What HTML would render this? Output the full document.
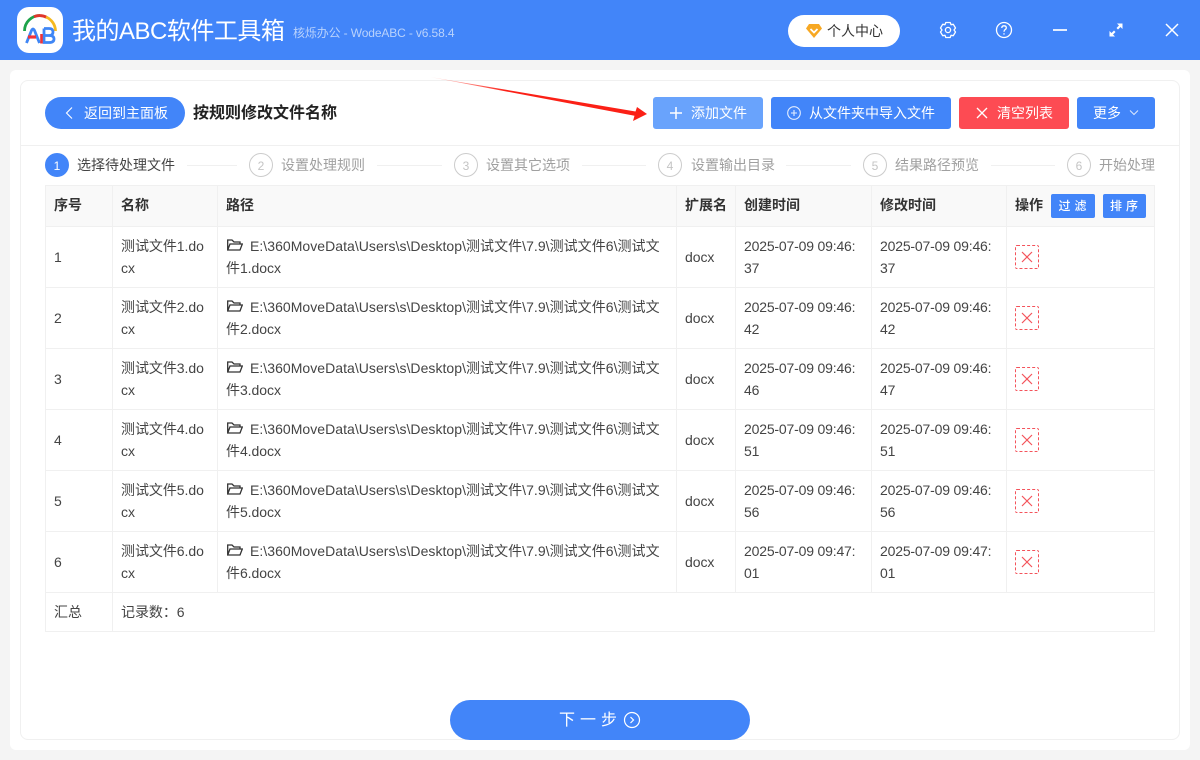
<!DOCTYPE html>
<html lang="zh-CN"><head><meta charset="utf-8"><title>我的ABC软件工具箱</title>
<style>
*{box-sizing:border-box}
html,body{margin:0;padding:0;width:1200px;height:760px;overflow:hidden;background:#f4f4f4;font-family:"Liberation Sans","Noto Sans CJK SC",sans-serif;color:#333;font-size:14px}
.a{position:absolute;white-space:nowrap}
.hdr{left:0;top:0;width:1200px;height:60px;background:#4285f9}
.panel{left:10px;top:70px;width:1180px;height:680px;background:#fff;border-radius:6px}
.card{left:20px;top:80px;width:1160px;height:660px;border:1px solid #f0f0f0;border-radius:8px;background:#fff}
.btn{height:32px;line-height:32px;color:#fff;border-radius:3px;background:#4285f9;font-size:14px;top:97px}
.line{background:#f0f0f0;height:1px}
.num{width:24px;height:24px;border-radius:50%;border:1px solid #ccc;color:#c4c4c4;text-align:center;line-height:24px;font-size:12px;top:153px}
.st{top:155px;font-size:14px;line-height:20px;color:#a0a0a0}
.v{width:1px;background:#f0f0f0}
.h{height:1px;background:#f0f0f0;left:45px;width:1110px}
.th{font-weight:bold;color:#333;font-size:14px;top:195px;line-height:20px}
.t{font-size:14px;line-height:22px;color:#444;letter-spacing:-.05px}
.p{letter-spacing:.04px}
.d{letter-spacing:-.18px}
.x{left:1015px;width:24px;height:24px;border:1px dashed #f4535b;border-radius:2px}
.x svg{display:block;margin:4px}
.small{top:194px;height:24px;line-height:24px;border-radius:2px;background:#4285f9;color:#fff;font-size:12px;font-weight:500;text-align:center;letter-spacing:4px;text-indent:3px}
.folder{left:227px}
</style></head><body>
<div class="a hdr"></div>
<div class="a" style="left:17px;top:7px;width:46px;height:46px;background:#fff;border-radius:12px"></div>
<svg class="a" style="left:17px;top:7px" width="46" height="46" viewBox="0 0 46 46" fill="none">
<path d="M7.500 24A15.500 15.500 0 0 1 23 8.500" stroke="#1da34a" stroke-width="2.800"/>
<path d="M17 9.700A15.500 15.500 0 0 1 30 10.500" stroke="#e0352b" stroke-width="2.800"/>
<path d="M29 10A15.500 15.500 0 0 1 38.500 24" stroke="#f5b921" stroke-width="2.800"/>
<path d="M9.500 36L14.500 23.500Q16 20.500 17.500 23.500L22.500 36" stroke="#3f86f5" stroke-width="2.800"/>
<path d="M11 30H19" stroke="#ef3338" stroke-width="3.200"/>
<path d="M27 21.500H32Q36 21.500 36 25Q36 28.500 32 28.500H27M32 28.500Q37 28.500 37 32Q37 35.500 32 35.500H27V21.500" stroke="#3f86f5" stroke-width="2.800"/>
<path d="M24.500 27V36.500" stroke="#ef3338" stroke-width="2.600"/>
</svg>
<div class="a" style="left:72px;top:15px;font-size:24px;line-height:34px;color:#fff;letter-spacing:-.5px">我的ABC软件工具箱</div>
<div class="a" style="left:293px;top:24px;font-size:12px;line-height:18px;color:#b9d2fc;letter-spacing:-.13px">核烁办公 - WodeABC - v6.58.4</div>
<div class="a" style="left:788px;top:15px;width:112px;height:32px;border-radius:16px;background:#fff"></div>
<svg class="a" style="left:805px;top:23px" width="18" height="16" viewBox="0 0 18 16"><path d="M4 1H14L17 5.500L9 15L1 5.500Z" fill="#f7a823"/><path d="M5.500 6L9 9.500L12.500 6" fill="none" stroke="#fff" stroke-width="1.800"/></svg>
<div class="a" style="left:827px;top:21px;font-size:14px;line-height:20px;color:#333">个人中心</div>
<svg class="a" style="left:938px;top:20px" width="20" height="20" viewBox="0 0 20 20" fill="none" stroke="#fff" stroke-width="1.300"><path d="M7.800 2.500H12.200L13 4.700L15.300 4.300L17.500 8L16 10L17.500 12L15.300 15.700L13 15.300L12.200 17.500H7.800L7 15.300L4.700 15.700L2.500 12L4 10L2.500 8L4.700 4.300L7 4.700Z" stroke-linejoin="round"/><circle cx="10" cy="10" r="2.600"/></svg>
<svg class="a" style="left:994px;top:20px" width="20" height="20" viewBox="0 0 20 20" fill="none" stroke="#fff" stroke-width="1.300"><circle cx="10" cy="10" r="7.500"/><path d="M7.800 8Q7.800 5.800 10 5.800Q12.300 5.800 12.300 7.800Q12.300 9 11 9.700Q10 10.300 10 11.700"/><path d="M10 13.200V14.600"/></svg>
<div class="a" style="left:1053px;top:29px;width:14px;height:2px;background:#e3edfe"></div>
<svg class="a" style="left:1108px;top:22px" width="16" height="16" viewBox="0 0 16 16" fill="#fff"><path d="M9 1.500H14.500V7L12.500 5L10 7.500L8.500 6L11 3.500Z"/><path d="M7 14.500H1.500V9L3.500 11L6 8.500L7.500 10L5 12.500Z"/></svg>
<svg class="a" style="left:1164px;top:22px" width="16" height="16" viewBox="0 0 16 16" stroke="#fff" stroke-width="1.500"><path d="M2 2L14 14M14 2L2 14"/></svg>

<div class="a panel"></div>
<div class="a card"></div>
<div class="a line" style="left:21px;top:145px;width:1158px"></div>

<div class="a" style="left:45px;top:97px;width:140px;height:32px;border-radius:16px;background:#4285f9"></div>
<svg class="a" style="left:63px;top:106px" width="12" height="14" viewBox="0 0 12 14" fill="none" stroke="#fff" stroke-width="1.100"><path d="M9 1.500L3.500 7L9 12.500"/></svg>
<div class="a" style="left:84px;top:103px;font-size:14px;line-height:20px;color:#fff">返回到主面板</div>
<div class="a" style="left:193px;top:102px;font-size:16px;line-height:23px;font-weight:bold;color:#222">按规则修改文件名称</div>

<svg class="a" style="left:425px;top:72px" width="225" height="55" viewBox="0 0 225 55"><defs><linearGradient id="g" x1="0" x2="1" y1="0" y2="0"><stop offset="0" stop-color="#ff2a1f" stop-opacity=".15"/><stop offset=".35" stop-color="#fb2016"/></linearGradient></defs><path d="M5 5L210.500 39.500L212 35L222 42L208 49L209.500 43.800Z" fill="url(#g)"/></svg>

<div class="a btn" style="left:653px;width:110px;background:#69a3fc"></div>
<svg class="a" style="left:669px;top:106px" width="14" height="14" viewBox="0 0 14 14" stroke="#fff" stroke-width="1.500"><path d="M7 1V13M1 7H13"/></svg>
<div class="a" style="left:691px;top:103px;line-height:20px;color:#fff">添加文件</div>
<div class="a btn" style="left:771px;width:180px"></div>
<svg class="a" style="left:787px;top:106px" width="14" height="14" viewBox="0 0 14 14" fill="none" stroke="#e5eefe" stroke-width="1.100"><circle cx="7" cy="7" r="6.300"/><path d="M7 4V10M4 7H10"/></svg>
<div class="a" style="left:809px;top:103px;line-height:20px;color:#fff">从文件夹中导入文件</div>
<div class="a btn" style="left:959px;width:110px;background:#fd4b53"></div>
<svg class="a" style="left:976px;top:107px" width="12" height="12" viewBox="0 0 12 12" stroke="#fff" stroke-width="1.300"><path d="M1 1L11 11M11 1L1 11"/></svg>
<div class="a" style="left:997px;top:103px;line-height:20px;color:#fff">清空列表</div>
<div class="a btn" style="left:1077px;width:78px"></div>
<div class="a" style="left:1093px;top:103px;line-height:20px;color:#fff">更多</div>
<svg class="a" style="left:1129px;top:109px" width="10" height="8" viewBox="0 0 10 8" fill="none" stroke="#dce8fe" stroke-width="1"><path d="M1 1.500L5 5.500L9 1.500"/></svg>

<div class="a num" style="left:45px;background:#4285f9;border-color:#4285f9;color:#fff">1</div>
<div class="a st" style="left:77px;color:#444">选择待处理文件</div>
<div class="a line" style="left:187px;top:165px;width:50px"></div>
<div class="a num" style="left:249px">2</div>
<div class="a st" style="left:281px">设置处理规则</div>
<div class="a line" style="left:377px;top:165px;width:65px"></div>
<div class="a num" style="left:454px">3</div>
<div class="a st" style="left:486px">设置其它选项</div>
<div class="a line" style="left:582px;top:165px;width:64px"></div>
<div class="a num" style="left:658px">4</div>
<div class="a st" style="left:691px">设置输出目录</div>
<div class="a line" style="left:786px;top:165px;width:65px"></div>
<div class="a num" style="left:863px">5</div>
<div class="a st" style="left:895px">结果路径预览</div>
<div class="a line" style="left:991px;top:165px;width:64px"></div>
<div class="a num" style="left:1067px">6</div>
<div class="a st" style="left:1099px">开始处理</div>

<div class="a" style="left:45px;top:185px;width:1110px;height:41px;background:#f9f9f9"></div>
<div class="a h" style="top:185px"></div><div class="a h" style="top:226px"></div><div class="a h" style="top:287px"></div><div class="a h" style="top:348px"></div><div class="a h" style="top:409px"></div><div class="a h" style="top:470px"></div><div class="a h" style="top:531px"></div><div class="a h" style="top:592px"></div><div class="a h" style="top:631px"></div>
<div class="a v" style="left:45px;top:185px;height:446px"></div>
<div class="a v" style="left:112px;top:185px;height:446px"></div>
<div class="a v" style="left:217px;top:185px;height:407px"></div>
<div class="a v" style="left:676px;top:185px;height:407px"></div>
<div class="a v" style="left:735px;top:185px;height:407px"></div>
<div class="a v" style="left:871px;top:185px;height:407px"></div>
<div class="a v" style="left:1006px;top:185px;height:407px"></div>
<div class="a v" style="left:1154px;top:185px;height:446px"></div>

<div class="a th" style="left:54px">序号</div>
<div class="a th" style="left:121px">名称</div>
<div class="a th" style="left:226px">路径</div>
<div class="a th" style="left:685px">扩展名</div>
<div class="a th" style="left:744px">创建时间</div>
<div class="a th" style="left:880px">修改时间</div>
<div class="a th" style="left:1015px">操作</div>
<div class="a small" style="left:1051px;width:44px">过滤</div>
<div class="a small" style="left:1103px;width:43px">排序</div>

<div class="a t" style="left:54px;top:246px">1</div>
<div class="a t" style="left:121px;top:235px">测试文件1.do<br>cx</div>
<svg class="a folder" style="top:239px" width="16" height="12" viewBox="0 0 16 12" fill="none" stroke="#333" stroke-width="1.300"><path d="M.7 11V1H5L7 3H13V5M.7 11L3 5H15.300L13 11Z"/></svg>
<div class="a t p" style="left:250px;top:235px">E:\360MoveData\Users\s\Desktop\测试文件\7.9\测试文件6\测试文</div>
<div class="a t" style="left:226px;top:257px">件1.docx</div>
<div class="a t" style="left:685px;top:246px">docx</div>
<div class="a t d" style="left:744px;top:235px">2025-07-09 09:46:<br>37</div>
<div class="a t d" style="left:880px;top:235px">2025-07-09 09:46:<br>37</div>
<div class="a x" style="top:245px"><svg width="14" height="14" viewBox="0 0 14 14" stroke="#f4535b" stroke-width="1.200"><path d="M2 2L12 12M12 2L2 12"/></svg></div>

<div class="a t" style="left:54px;top:307px">2</div>
<div class="a t" style="left:121px;top:296px">测试文件2.do<br>cx</div>
<svg class="a folder" style="top:300px" width="16" height="12" viewBox="0 0 16 12" fill="none" stroke="#333" stroke-width="1.300"><path d="M.7 11V1H5L7 3H13V5M.7 11L3 5H15.300L13 11Z"/></svg>
<div class="a t p" style="left:250px;top:296px">E:\360MoveData\Users\s\Desktop\测试文件\7.9\测试文件6\测试文</div>
<div class="a t" style="left:226px;top:318px">件2.docx</div>
<div class="a t" style="left:685px;top:307px">docx</div>
<div class="a t d" style="left:744px;top:296px">2025-07-09 09:46:<br>42</div>
<div class="a t d" style="left:880px;top:296px">2025-07-09 09:46:<br>42</div>
<div class="a x" style="top:306px"><svg width="14" height="14" viewBox="0 0 14 14" stroke="#f4535b" stroke-width="1.200"><path d="M2 2L12 12M12 2L2 12"/></svg></div>

<div class="a t" style="left:54px;top:368px">3</div>
<div class="a t" style="left:121px;top:357px">测试文件3.do<br>cx</div>
<svg class="a folder" style="top:361px" width="16" height="12" viewBox="0 0 16 12" fill="none" stroke="#333" stroke-width="1.300"><path d="M.7 11V1H5L7 3H13V5M.7 11L3 5H15.300L13 11Z"/></svg>
<div class="a t p" style="left:250px;top:357px">E:\360MoveData\Users\s\Desktop\测试文件\7.9\测试文件6\测试文</div>
<div class="a t" style="left:226px;top:379px">件3.docx</div>
<div class="a t" style="left:685px;top:368px">docx</div>
<div class="a t d" style="left:744px;top:357px">2025-07-09 09:46:<br>46</div>
<div class="a t d" style="left:880px;top:357px">2025-07-09 09:46:<br>47</div>
<div class="a x" style="top:367px"><svg width="14" height="14" viewBox="0 0 14 14" stroke="#f4535b" stroke-width="1.200"><path d="M2 2L12 12M12 2L2 12"/></svg></div>

<div class="a t" style="left:54px;top:429px">4</div>
<div class="a t" style="left:121px;top:418px">测试文件4.do<br>cx</div>
<svg class="a folder" style="top:422px" width="16" height="12" viewBox="0 0 16 12" fill="none" stroke="#333" stroke-width="1.300"><path d="M.7 11V1H5L7 3H13V5M.7 11L3 5H15.300L13 11Z"/></svg>
<div class="a t p" style="left:250px;top:418px">E:\360MoveData\Users\s\Desktop\测试文件\7.9\测试文件6\测试文</div>
<div class="a t" style="left:226px;top:440px">件4.docx</div>
<div class="a t" style="left:685px;top:429px">docx</div>
<div class="a t d" style="left:744px;top:418px">2025-07-09 09:46:<br>51</div>
<div class="a t d" style="left:880px;top:418px">2025-07-09 09:46:<br>51</div>
<div class="a x" style="top:428px"><svg width="14" height="14" viewBox="0 0 14 14" stroke="#f4535b" stroke-width="1.200"><path d="M2 2L12 12M12 2L2 12"/></svg></div>

<div class="a t" style="left:54px;top:490px">5</div>
<div class="a t" style="left:121px;top:479px">测试文件5.do<br>cx</div>
<svg class="a folder" style="top:483px" width="16" height="12" viewBox="0 0 16 12" fill="none" stroke="#333" stroke-width="1.300"><path d="M.7 11V1H5L7 3H13V5M.7 11L3 5H15.300L13 11Z"/></svg>
<div class="a t p" style="left:250px;top:479px">E:\360MoveData\Users\s\Desktop\测试文件\7.9\测试文件6\测试文</div>
<div class="a t" style="left:226px;top:501px">件5.docx</div>
<div class="a t" style="left:685px;top:490px">docx</div>
<div class="a t d" style="left:744px;top:479px">2025-07-09 09:46:<br>56</div>
<div class="a t d" style="left:880px;top:479px">2025-07-09 09:46:<br>56</div>
<div class="a x" style="top:489px"><svg width="14" height="14" viewBox="0 0 14 14" stroke="#f4535b" stroke-width="1.200"><path d="M2 2L12 12M12 2L2 12"/></svg></div>

<div class="a t" style="left:54px;top:551px">6</div>
<div class="a t" style="left:121px;top:540px">测试文件6.do<br>cx</div>
<svg class="a folder" style="top:544px" width="16" height="12" viewBox="0 0 16 12" fill="none" stroke="#333" stroke-width="1.300"><path d="M.7 11V1H5L7 3H13V5M.7 11L3 5H15.300L13 11Z"/></svg>
<div class="a t p" style="left:250px;top:540px">E:\360MoveData\Users\s\Desktop\测试文件\7.9\测试文件6\测试文</div>
<div class="a t" style="left:226px;top:562px">件6.docx</div>
<div class="a t" style="left:685px;top:551px">docx</div>
<div class="a t d" style="left:744px;top:540px">2025-07-09 09:47:<br>01</div>
<div class="a t d" style="left:880px;top:540px">2025-07-09 09:47:<br>01</div>
<div class="a x" style="top:550px"><svg width="14" height="14" viewBox="0 0 14 14" stroke="#f4535b" stroke-width="1.200"><path d="M2 2L12 12M12 2L2 12"/></svg></div>

<div class="a t" style="left:54px;top:601px">汇总</div>
<div class="a t" style="left:121px;top:601px">记录数：6</div>

<div class="a" style="left:450px;top:700px;width:300px;height:40px;border-radius:20px;background:#4285f9"></div>
<div class="a" style="left:559px;top:709px;font-size:16px;line-height:23px;color:#fff;letter-spacing:5px">下一步</div>
<svg class="a" style="left:623px;top:711px" width="18" height="18" viewBox="0 0 18 18" fill="none" stroke="#fff" stroke-width="1.200"><circle cx="9" cy="9" r="7.500"/><path d="M7.500 6L10.500 9L7.500 12"/></svg>
</body></html>
